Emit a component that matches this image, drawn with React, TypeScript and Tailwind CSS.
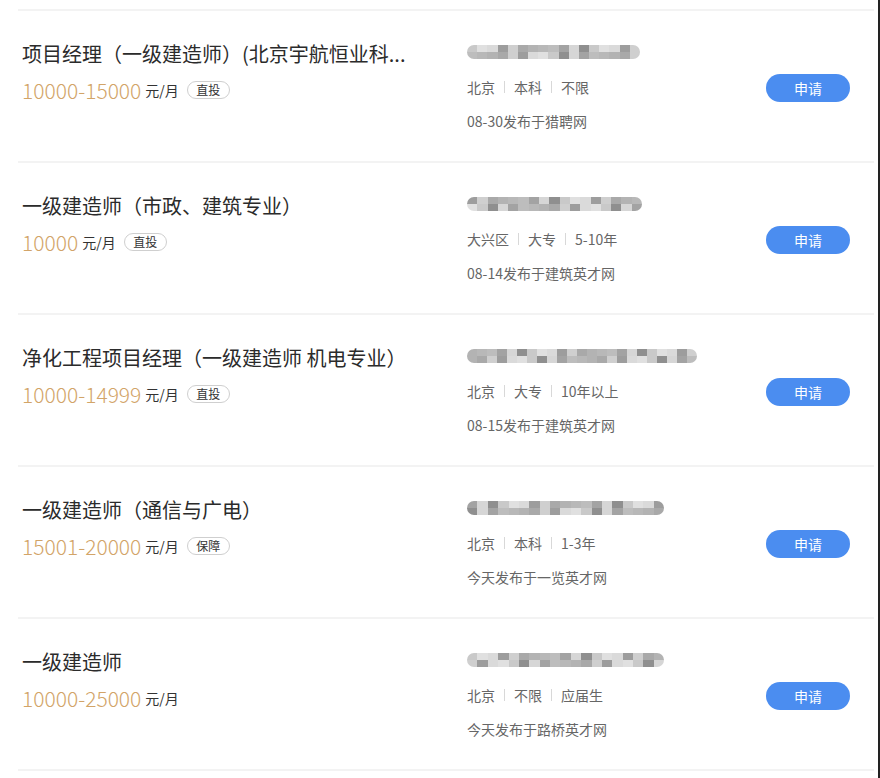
import React from "react";

type Job = {
  title: string;
  salary: string;
  badge?: string;
  tags: string[];
  source: string;
  blur: number;
};

const jobs: Job[] = [
  { title: "项目经理（一级建造师）(北京宇航恒业科...", salary: "10000-15000", badge: "直投", tags: ["北京", "本科", "不限"], source: "08-30发布于猎聘网", blur: 173 },
  { title: "一级建造师（市政、建筑专业）", salary: "10000", badge: "直投", tags: ["大兴区", "大专", "5-10年"], source: "08-14发布于建筑英才网", blur: 175 },
  { title: "净化工程项目经理（一级建造师 机电专业）", salary: "10000-14999", badge: "直投", tags: ["北京", "大专", "10年以上"], source: "08-15发布于建筑英才网", blur: 230 },
  { title: "一级建造师（通信与广电）", salary: "15001-20000", badge: "保障", tags: ["北京", "本科", "1-3年"], source: "今天发布于一览英才网", blur: 197 },
  { title: "一级建造师", salary: "10000-25000", tags: ["北京", "不限", "应届生"], source: "今天发布于路桥英才网", blur: 197 },
];

const shades = ["#c9c9c9", "#a9a9a9", "#d6d6d6", "#9d9d9d", "#bdbdbd", "#e0e0e0", "#b3b3b3", "#8f8f8f", "#cfcfcf", "#a3a3a3", "#dadada", "#b8b8b8"];

function Blur({ width, seed }: { width: number; seed: number }) {
  const cells = Math.floor(width / 10);
  return (
    <div className="flex h-[14px] flex-col overflow-hidden rounded-full blur-[0.6px]" style={{ width }}>
      <div className="flex h-[7px]">
        {Array.from({ length: cells }).map((_, i) => (
          <div key={i} className="h-full flex-1" style={{ background: shades[(i * 5 + seed * 3) % shades.length] }} />
        ))}
      </div>
      <div className="flex h-[7px]">
        {Array.from({ length: cells }).map((_, i) => (
          <div key={i} className="h-full flex-1" style={{ background: shades[(i * 7 + seed + 4) % shades.length] }} />
        ))}
      </div>
    </div>
  );
}

export default function App() {
  return (
    <div
      className="h-[778px] w-[880px] overflow-hidden border-r-2 border-[#222] bg-white pt-[9px]"
      style={{ fontFamily: '"Noto Sans CJK SC", "Noto Sans", sans-serif' }}
    >
      <div className="ml-[18px] mr-[4px] h-[2px] bg-[#f3f3f3]" />
      {jobs.map((job, idx) => (
        <div key={job.title}>
          <div className="flex h-[150px]">
            <div className="w-[467px] pl-[22px] pt-[30px]">
              <div className="h-[26px] text-[20px] leading-[26px] text-[#2b2b2b] whitespace-nowrap">{job.title}</div>
              <div className="mt-[11px] flex h-[24px] items-center">
                <span className="text-[21px] font-light leading-[24px] text-[#d2a468]">{job.salary}</span>
                <span className="ml-[4px] text-[14px] text-[#333]">元/月</span>
                {job.badge ? (
                  <span className="ml-[8px] flex h-[18px] w-[43px] items-center justify-center rounded-full border border-[#cfcfcf] text-[12px] leading-none text-[#333]">
                    {job.badge}
                  </span>
                ) : null}
              </div>
            </div>
            <div className="flex-1 pt-[34px]">
              <Blur width={job.blur} seed={idx} />
              <div className="mt-[18px] flex h-[20px] items-center text-[14px] text-[#666]">
                {job.tags.map((tag, i) => (
                  <React.Fragment key={tag}>
                    {i > 0 ? <span className="mx-[9px] h-[12px] w-px bg-[#d8d8d8]" /> : null}
                    <span>{tag}</span>
                  </React.Fragment>
                ))}
              </div>
              <div className="mt-[14px] h-[20px] text-[14px] leading-[20px] text-[#666]">{job.source}</div>
            </div>
            <div className="mr-[28px] pt-[63px]">
              <button className="flex h-[28px] w-[84px] items-center justify-center rounded-full bg-[#4b8df0] text-[14px] text-white">
                申请
              </button>
            </div>
          </div>
          <div className="ml-[18px] mr-[4px] h-[2px] bg-[#f3f3f3]" />
        </div>
      ))}
    </div>
  );
}
